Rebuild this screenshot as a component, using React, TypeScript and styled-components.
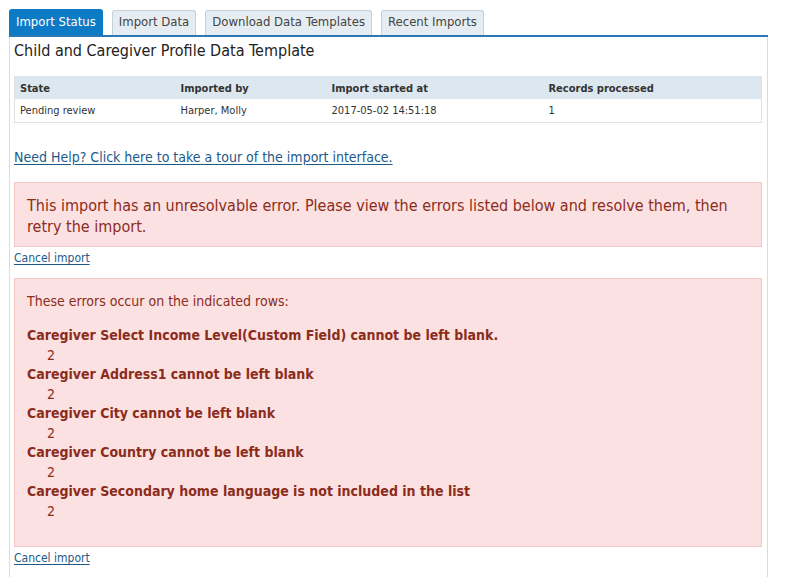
import React from "react";
import styled, { createGlobalStyle } from "styled-components";

const Global = createGlobalStyle`
  html, body { margin: 0; padding: 0; background: #fff; }
  body { font-family: "DejaVu Sans Condensed", "DejaVu Sans", sans-serif; color: #333; }
`;

const Page = styled.div`
  padding: 9px 30px 0 9px;
  width: 759px;
`;

const TabBar = styled.div`
  display: flex;
  align-items: flex-end;
  gap: 9px;
  border-bottom: 2px solid #2b78b8;
  height: 26px;
`;

const Tab = styled.div<{ $active?: boolean }>`
  box-sizing: border-box;
  height: ${(p) => (p.$active ? "26px" : "25px")};
  padding: 0 6px 3px;
  display: flex;
  align-items: center;
  font-size: 13px;
  border-radius: 3px 3px 0 0;
  color: ${(p) => (p.$active ? "#fff" : "#444")};
  background: ${(p) => (p.$active ? "#0d7ac6" : "#e6edf2")};
  border: 1px solid ${(p) => (p.$active ? "#0d7ac6" : "#c6d2db")};
  border-bottom: none;
`;

const Panel = styled.div`
  border-left: 1px solid #cfe0ea;
  border-right: 1px solid #cfe0ea;
  padding: 4px 5px 12px 4px;
`;

const Title = styled.h1`
  margin: 0;
  font-size: 16px;
  font-weight: normal;
  line-height: 20px;
  color: #222;
`;

const Table = styled.table`
  margin-top: 15px;
  width: 100%;
  table-layout: fixed;
  border-collapse: collapse;
  border: 1px solid #dde3e8;
  font-size: 11px;
`;

const Th = styled.th`
  background: #dce7ef;
  text-align: left;
  font-weight: bold;
  height: 22px;
  padding: 0 5px;
  color: #333;
`;

const Td = styled.td`
  height: 23px;
  padding: 0 5px;
  color: #333;
`;

const HelpLink = styled.a`
  display: block;
  margin-top: 26px;
  font-size: 14px;
  line-height: 17px;
  color: #1d5a8a;
  text-decoration: underline;
  text-underline-offset: 2px;
`;

const ErrorBox = styled.div<{ $tall?: boolean }>`
  background: #fbe1e1;
  border: 1px solid #f0c6c6;
  color: #8b2c1c;
  padding: ${(p) => (p.$tall ? "12px 12px 25px" : "12px 12px 9px")};
  margin-top: ${(p) => (p.$tall ? "0" : "16px")};
`;

const Notice = styled.div`
  font-size: 16px;
  line-height: 21px;
`;

const CancelLink = styled.a`
  display: block;
  font-size: 12px;
  line-height: 15px;
  margin: 4px 0 12px;
  color: #1d5a8a;
  text-decoration: underline;
  text-underline-offset: 2px;
`;

const Lead = styled.p`
  margin: 0 0 15px;
  font-size: 14px;
  line-height: 20px;
`;

const ErrList = styled.dl`
  margin: 0;
  font-size: 14px;
`;

const ErrTitle = styled.dt`
  font-weight: bold;
  line-height: 19px;
`;

const ErrRows = styled.dd`
  margin: 0 0 0 20px;
  line-height: 20px;
`;

const errors = [
  "Caregiver Select Income Level(Custom Field) cannot be left blank.",
  "Caregiver Address1 cannot be left blank",
  "Caregiver City cannot be left blank",
  "Caregiver Country cannot be left blank",
  "Caregiver Secondary home language is not included in the list",
];

export default function App() {
  return (
    <Page>
      <Global />
      <TabBar>
        <Tab $active>Import Status</Tab>
        <Tab>Import Data</Tab>
        <Tab>Download Data Templates</Tab>
        <Tab>Recent Imports</Tab>
      </TabBar>
      <Panel>
        <Title>Child and Caregiver Profile Data Template</Title>
        <Table>
          <colgroup>
            <col style={{ width: 161 }} />
            <col style={{ width: 151 }} />
            <col style={{ width: 217 }} />
            <col />
          </colgroup>
          <thead>
            <tr>
              <Th>State</Th>
              <Th>Imported by</Th>
              <Th>Import started at</Th>
              <Th>Records processed</Th>
            </tr>
          </thead>
          <tbody>
            <tr>
              <Td>Pending review</Td>
              <Td>Harper, Molly</Td>
              <Td>2017-05-02 14:51:18</Td>
              <Td>1</Td>
            </tr>
          </tbody>
        </Table>
        <HelpLink href="#">Need Help? Click here to take a tour of the import interface.</HelpLink>
        <ErrorBox>
          <Notice>
            This import has an unresolvable error. Please view the errors listed below and resolve them, then retry the import.
          </Notice>
        </ErrorBox>
        <CancelLink href="#">Cancel import</CancelLink>
        <ErrorBox $tall>
          <Lead>These errors occur on the indicated rows:</Lead>
          <ErrList>
            {errors.map((e) => (
              <React.Fragment key={e}>
                <ErrTitle>{e}</ErrTitle>
                <ErrRows>2</ErrRows>
              </React.Fragment>
            ))}
          </ErrList>
        </ErrorBox>
        <CancelLink href="#">Cancel import</CancelLink>
      </Panel>
    </Page>
  );
}
